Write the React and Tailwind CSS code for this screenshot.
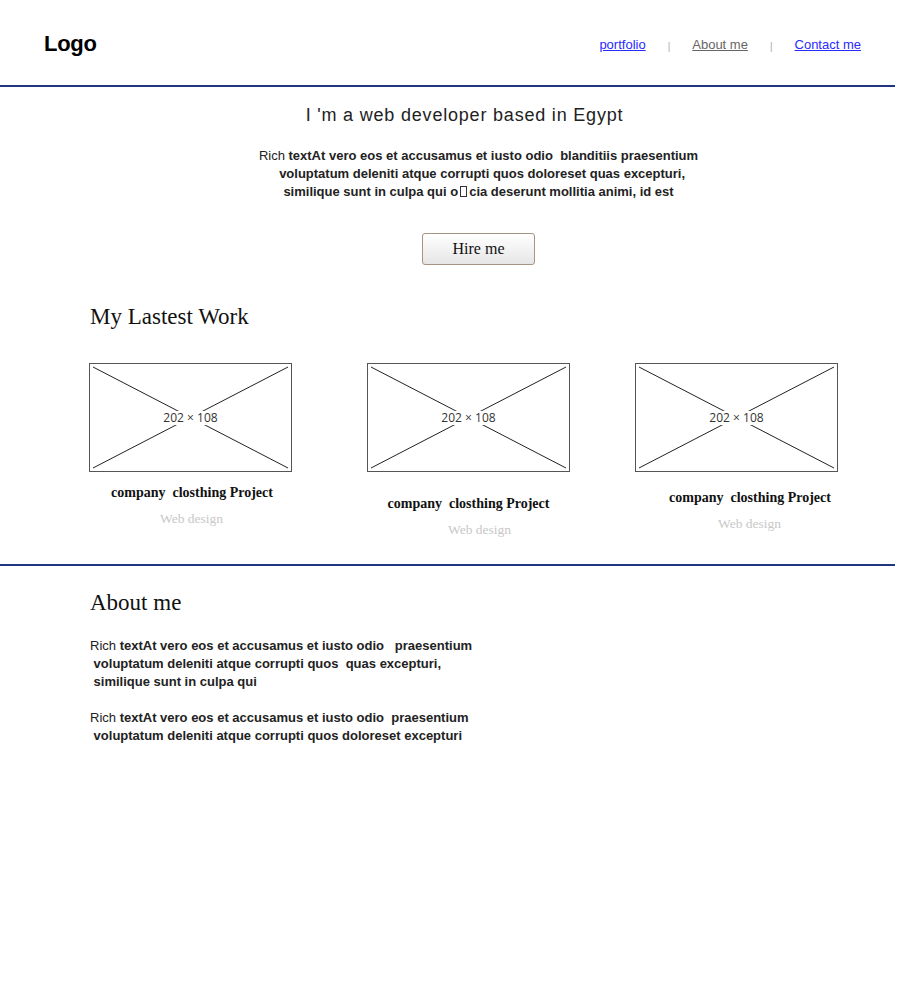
const works = [
  { box: 'ml-[89px]', cap: 'mt-[13px] ml-[3px]', sub: 'mt-[10px] ml-[2px]' },
  { box: 'ml-[75px]', cap: 'mt-[24px] ml-0', sub: 'mt-[10px] ml-[22px]' },
  { box: 'ml-[65px]', cap: 'mt-[18px] ml-[27px]', sub: 'mt-[10px] ml-[26px]' },
];

function Placeholder() {
  return (
    <div className="relative w-[203px] h-[109px] border border-[#555] flex items-center justify-center">
      <svg className="absolute inset-0" width="201" height="107" viewBox="0 0 201 107">
        <line x1="3" y1="3" x2="198" y2="104" stroke="#222" strokeWidth="1" />
        <line x1="198" y1="3" x2="3" y2="104" stroke="#222" strokeWidth="1" />
      </svg>
      <span className="relative bg-white px-[3px] text-[12px] leading-[14px] text-[#333] font-['Open_Sans',sans-serif]">
        202 × 108
      </span>
    </div>
  );
}

export default function App() {
  return (
    <div className="w-[895px] bg-white min-h-[1000px] font-['Liberation_Sans',Arial,sans-serif] text-[#222]">
      {/* header */}
      <header className="h-[85px] flex items-center justify-between pl-[44px] pr-[34px]">
        <div className="text-[22px] font-bold text-black tracking-[-0.3px] mt-[2px]">Logo</div>
        <nav className="flex items-center text-[13px] mt-[4px]">
          <a href="#" className="text-[#2a2aff] underline">portfolio</a>
          <span className="text-[#aaa] text-[10px] mx-[22px] mt-[4px]">|</span>
          <a href="#" className="text-[#666] underline">About me</a>
          <span className="text-[#aaa] text-[10px] mx-[22px] mt-[4px]">|</span>
          <a href="#" className="text-[#2a2aff] underline">Contact me</a>
        </nav>
      </header>
      <div className="h-[2px] bg-[#1f3580]" />

      {/* hero */}
      <section className="pl-[62px] text-center">
        <h1 className="mt-[17px] pr-[28px] text-[18px] leading-[22px] tracking-[0.8px] text-[#222]">
          I 'm a web developer based in Egypt
        </h1>
        <p className="mt-[21px] text-[13px] leading-[18px] text-[#222]">
          Rich <b>textAt vero eos et accusamus et iusto odio&nbsp; blanditiis praesentium</b>
          <br />
          <b>&nbsp; voluptatum deleniti atque corrupti quos doloreset quas excepturi,</b>
          <br />
          <b>
            similique sunt in culpa qui o
            <span className="inline-block w-[7px] h-[11px] mx-[2px] border border-[#333] align-[-1px]" />
            cia deserunt mollitia animi, id est
          </b>
        </p>
        <button className="mt-[32px] w-[113px] h-[32px] rounded-[3px] border border-[#a39483] bg-gradient-to-b from-white to-[#e6e6e6] text-[16px] text-[#111] font-['Liberation_Serif',serif]">
          Hire me
        </button>
      </section>

      {/* work */}
      <section>
        <h2 className="ml-[90px] mt-[38px] text-[23px] leading-[28px] text-[#111] font-['Liberation_Serif',serif]">
          My Lastest Work
        </h2>
        <div className="flex mt-[32px] items-start">
          {works.map((w, i) => (
            <div key={i} className={`flex flex-col items-center w-[203px] ${w.box}`}>
              <Placeholder />
              <div className={`${w.cap} text-[14px] leading-[16px] font-bold text-[#111] font-['Liberation_Serif',serif] whitespace-pre`}>
                company  closthing Project
              </div>
              <div className={`${w.sub} text-[13.5px] leading-[16px] text-[#c8c8c8] font-['Liberation_Serif',serif]`}>
                Web design
              </div>
            </div>
          ))}
        </div>
      </section>

      <div className="h-[2px] bg-[#1f3580] mt-[26px]" />

      {/* about */}
      <section className="pl-[90px]">
        <h2 className="mt-[23px] text-[23px] leading-[28px] text-[#111] font-['Liberation_Serif',serif]">
          About me
        </h2>
        <p className="mt-[20px] text-[13px] leading-[18px] whitespace-pre">
          Rich <b>textAt vero eos et accusamus et iusto odio   praesentium</b>
          <br />
          <b> voluptatum deleniti atque corrupti quos  quas excepturi,</b>
          <br />
          <b> similique sunt in culpa qui</b>
        </p>
        <p className="mt-[18px] text-[13px] leading-[18px] whitespace-pre">
          Rich <b>textAt vero eos et accusamus et iusto odio  praesentium</b>
          <br />
          <b> voluptatum deleniti atque corrupti quos doloreset excepturi</b>
        </p>
      </section>
    </div>
  );
}
